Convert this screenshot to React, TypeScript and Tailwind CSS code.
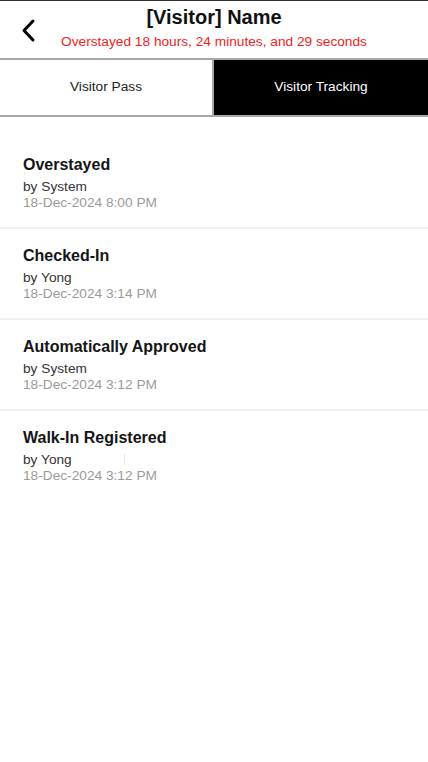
interface TrackEvent {
  status: string
  by: string
  at: string
}

const EVENTS: TrackEvent[] = [
  { status: 'Overstayed', by: 'System', at: '18-Dec-2024 8:00 PM' },
  { status: 'Checked-In', by: 'Yong', at: '18-Dec-2024 3:14 PM' },
  { status: 'Automatically Approved', by: 'System', at: '18-Dec-2024 3:12 PM' },
  { status: 'Walk-In Registered', by: 'Yong', at: '18-Dec-2024 3:12 PM' },
]

export default function App() {
  return (
    <div className="min-h-[762px] bg-white font-['Liberation_Sans',Arial,sans-serif] border-t border-[#333]">
      {/* header */}
      <div className="h-[57px] relative flex flex-col items-center pt-[5px]">
        <button className="absolute left-[19px] top-[17px] w-[18px] h-[26px] flex items-center justify-center text-black">
          <svg width="18" height="26" viewBox="0 0 18 26" fill="none" stroke="currentColor" strokeWidth="3" strokeLinecap="round" strokeLinejoin="round">
            <polyline points="14,3 5,12.5 14,22" />
          </svg>
        </button>
        <h1 className="text-[20px] leading-[22px] font-bold text-[#111]">[Visitor] Name</h1>
        <p className="text-[13.7px] leading-[18px] text-[#ee2222] mt-[5px]">Overstayed 18 hours, 24 minutes, and 29 seconds</p>
      </div>

      {/* tabs */}
      <div className="flex h-[59px] border-y-2 border-[#a8a8a8]">
        <button className="w-1/2 bg-white text-[13.7px] text-[#222] border-r-2 border-[#a8a8a8]">Visitor Pass</button>
        <button className="w-1/2 bg-black text-[13.7px] text-white">Visitor Tracking</button>
      </div>

      {/* timeline */}
      <div className="pt-[21px]">
        {EVENTS.map((e, i) => (
          <div key={i} className={`relative px-[23px] pt-[17px] pb-[16px] ${i < EVENTS.length - 1 ? 'border-b-2 border-[#f0f0f0]' : ''}`}>
            <p className="text-[16px] leading-[20px] font-bold text-[#151515]">{e.status}</p>
            <p className="mt-[3px] text-[13.7px] leading-[17px] text-[#333]">by {e.by}</p>
            <p className="text-[13.7px] leading-[16px] text-[#9a9a9a]">{e.at}</p>
            {i === 3 && <span className="absolute left-[124px] top-[43px] w-px h-[10px] bg-[#d6e8f5]" />}
          </div>
        ))}
      </div>
    </div>
  )
}
